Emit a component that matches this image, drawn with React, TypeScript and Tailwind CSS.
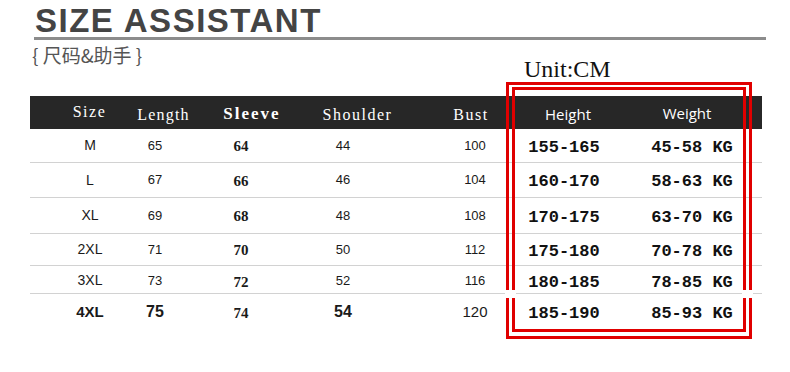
const cols = [
  "pl-[28px]",
  "pr-[10px]",
  "pr-[8px]",
  "pr-[15px]",
  "pl-[21px]",
  "pr-[20px]",
  "pr-[6px]",
];

const serifHead = "font-['Liberation_Serif',serif] text-[16px] tracking-[1.5px]";

const headCols = [
  { label: "Size", pad: "pl-[27px] pb-[2px]", font: serifHead },
  { label: "Length", pad: "pl-[7px] pt-[4px]", font: "font-['Liberation_Serif',serif] text-[16px] tracking-[1.2px]" },
  { label: "Sleeve", pad: "pl-[14px] pt-[2px]", font: "font-['Liberation_Serif',serif] text-[17px] font-bold tracking-[2px]" },
  { label: "Shoulder", pad: "pl-[14px] pt-[4px]", font: serifHead },
  { label: "Bust", pad: "pl-[13px] pt-[4px]", font: serifHead },
  { label: "Height", pad: "pr-[12px] pt-[4px]", font: "font-['Open_Sans',sans-serif] text-[15px] font-medium" },
  { label: "Weight", pad: "pr-[16px] pt-[2px]", font: "font-['Open_Sans',sans-serif] text-[15px] font-medium" },
];

const rows = [
  { size: "M", len: "65", sleeve: "64", sh: "44", bust: "100", h: "155-165", w: "45-58 KG", height: "h-[34px]", big: false },
  { size: "L", len: "67", sleeve: "66", sh: "46", bust: "104", h: "160-170", w: "58-63 KG", height: "h-[35px]", big: false },
  { size: "XL", len: "69", sleeve: "68", sh: "48", bust: "108", h: "170-175", w: "63-70 KG", height: "h-[36px]", big: false },
  { size: "2XL", len: "71", sleeve: "70", sh: "50", bust: "112", h: "175-180", w: "70-78 KG", height: "h-[32px]", big: false },
  { size: "3XL", len: "73", sleeve: "72", sh: "52", bust: "116", h: "180-185", w: "78-85 KG", height: "h-[28px]", big: false },
  { size: "4XL", len: "75", sleeve: "74", sh: "54", bust: "120", h: "185-190", w: "85-93 KG", height: "h-[36px]", big: true },
];

const sans = "font-['Liberation_Sans',Arial,sans-serif]";
const narrow = "font-['Liberation_Sans_Narrow','Liberation_Sans',sans-serif]";
const mono = "font-['Liberation_Mono',monospace]";

const App = () => {
  return (
    <div className="relative w-[790px] h-[372px] bg-white overflow-hidden text-[#1a1a1a]">
      {/* Title */}
      <div
        className={`pl-[35px] pt-[4px] text-[33px] leading-[33px] font-bold tracking-[1.5px] text-[#444] ${sans}`}
      >
        SIZE ASSISTANT
      </div>
      <div className="ml-[34px] w-[732px] h-[3px] bg-[#8c8c8c]" />

      <div className="flex">
        <div className="w-[524px] shrink-0 pl-[32px] pt-[4px] text-[19px] leading-[22px] text-[#555] font-['Noto_Sans_CJK_SC',sans-serif]">
          {"{ 尺码&助手 }"}
        </div>
        <div className="mt-[16px] text-[24px] leading-[26px] text-[#111] font-['Liberation_Serif',serif]">
          Unit:CM
        </div>
      </div>

      {/* Table */}
      <div className="ml-[30px] mt-[14px] w-[732px]">
        <div className="grid grid-cols-[92px_76px_94px_117px_111px_108px_134px] h-[33px] bg-[#272727] text-white">
          {headCols.map((c) => (
            <div key={c.label} className={`flex items-center justify-center ${c.pad} ${c.font}`}>
              {c.label}
            </div>
          ))}
        </div>

        {rows.map((r, i) => (
          <div
            key={r.size}
            className={`grid grid-cols-[92px_76px_94px_117px_111px_108px_134px] ${r.height} ${
              i < rows.length - 1 ? "border-b border-[#d2d2d2]" : ""
            }`}
          >
            <div className={`flex items-center justify-center ${cols[0]}`}>
              <span className={r.big ? `${sans} text-[15px] font-bold` : `${narrow} text-[14px]`}>
                {r.size}
              </span>
            </div>
            <div className={`flex items-center justify-center ${cols[1]}`}>
              <span className={r.big ? `${sans} text-[16px] font-bold` : `${sans} text-[13px]`}>
                {r.len}
              </span>
            </div>
            <div className={`flex items-center justify-center ${cols[2]}`}>
              <span className="font-['Liberation_Serif',serif] text-[15px] font-bold pt-[2px]">
                {r.sleeve}
              </span>
            </div>
            <div className={`flex items-center justify-center ${cols[3]}`}>
              <span className={r.big ? `${sans} text-[16px] font-bold` : `${sans} text-[13px]`}>
                {r.sh}
              </span>
            </div>
            <div className={`flex items-center justify-center ${cols[4]}`}>
              <span className={r.big ? `${sans} text-[15px]` : `${sans} text-[13px]`}>
                {r.bust}
              </span>
            </div>
            <div className={`flex items-center justify-center pt-[4px] ${cols[5]}`}>
              <span className={`${mono} text-[17px] font-bold text-[#111]`}>{r.h}</span>
            </div>
            <div className={`flex items-center justify-center pt-[4px] ${cols[6]}`}>
              <span className={`${mono} text-[17px] font-bold text-[#111]`}>{r.w}</span>
            </div>
          </div>
        ))}
      </div>

      {/* Red highlight frames */}
      <div className="absolute left-[506px] top-[82px] w-[246px] h-[257px] border-[3px] border-[#e00000]" />
      <div className="absolute left-[512px] top-[87px] w-[234px] h-[245px] border-[3px] border-[#e00000]" />
      <div className="absolute left-[505px] top-[290px] w-[11px] h-[8px] bg-white" />
      <div className="absolute left-[742px] top-[290px] w-[11px] h-[8px] bg-white" />
    </div>
  );
};

export default App;
